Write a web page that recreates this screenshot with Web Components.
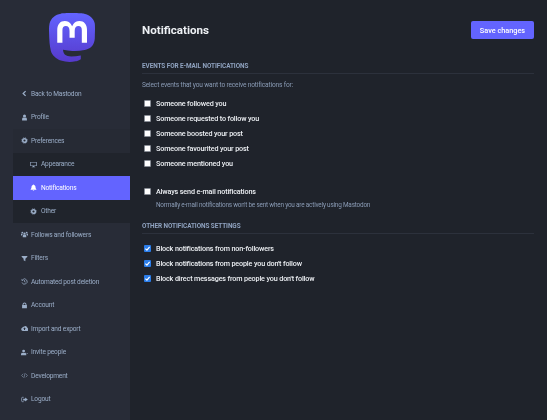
<!DOCTYPE html>
<html lang="en"><head><meta charset="utf-8"><title>Notifications</title>
<style>
html,body{margin:0;height:100%;background:#1f232b;overflow:hidden}
body{font-family:Roboto,"Liberation Sans",sans-serif}
</style></head><body>
<settings-page>
  <settings-nav slot="nav">
    <brand-logo></brand-logo>
    <nav-item icon="back">Back to Mastodon</nav-item>
    <nav-item icon="user">Profile</nav-item>
    <nav-group>
      <nav-item slot="head" icon="cog" tone="open">Preferences</nav-item>
      <nav-item sub icon="desktop">Appearance</nav-item>
      <nav-item sub active icon="bell">Notifications</nav-item>
      <nav-item sub icon="cog">Other</nav-item>
    </nav-group>
    <nav-item icon="users">Follows and followers</nav-item>
    <nav-item icon="filter">Filters</nav-item>
    <nav-item icon="history">Automated post deletion</nav-item>
    <nav-item icon="lock">Account</nav-item>
    <nav-item icon="cloud">Import and export</nav-item>
    <nav-item icon="userplus">Invite people</nav-item>
    <nav-item icon="code">Development</nav-item>
    <nav-item icon="signout">Logout</nav-item>
  </settings-nav>
  <page-header>Notifications<primary-button slot="action">Save changes</primary-button></page-header>
  <section-heading>Events for e-mail notifications</section-heading>
  <hint-text lead>Select events that you want to receive notifications for:</hint-text>
  <check-row>Someone followed you</check-row>
  <check-row>Someone requested to follow you</check-row>
  <check-row>Someone boosted your post</check-row>
  <check-row>Someone favourited your post</check-row>
  <check-row>Someone mentioned you</check-row>
  <check-row spaced>Always send e-mail notifications</check-row>
  <hint-text>Normally e-mail notifications won't be sent when you are actively using Mastodon</hint-text>
  <section-heading second>Other notifications settings</section-heading>
  <check-row checked>Block notifications from non-followers</check-row>
  <check-row checked>Block notifications from people you don't follow</check-row>
  <check-row checked>Block direct messages from people you don't follow</check-row>
</settings-page>
<script>
const ICONS={
 back:'<path d="M10.500 2.500 5 8l5.500 5.500" fill="none" stroke="currentColor" stroke-width="3"/>',
 user:'<circle cx="8" cy="4.500" r="3.500"/><path d="M2.500 15v-3.500c0-2.200 1.300-3.700 3-3.700.7.600 1.500.9 2.500.9s1.800-.3 2.500-.9c1.700 0 3 1.500 3 3.700V15z"/>',
 cog:'<circle cx="8" cy="8" r="4.200" fill="none" stroke="currentColor" stroke-width="3.400"/><circle cx="8" cy="8" r="6.300" fill="none" stroke="currentColor" stroke-width="1.800" stroke-dasharray="2.500 2.450"/>',
 desktop:'<path fill-rule="evenodd" d="M.5 2h15v9.500h-5.500l.5 2h1.500v1h-8v-1h1.500l.5-2H.5zM2 3.500v6.500h12V3.500z"/>',
 bell:'<path d="M8 1c.6 0 1 .4 1 1 2.400.5 3.500 2.300 3.500 4.500 0 3 .8 4.500 2 5.500v1h-13v-1c1.200-1 2-2.500 2-5.500C3.500 4.300 4.600 2.500 7 2c0-.6.400-1 1-1z"/><path d="M6.300 14h3.400a1.700 1.700 0 0 1-3.400 0z"/>',
 users:'<circle cx="8" cy="6" r="2.600"/><circle cx="3" cy="3.500" r="2"/><circle cx="13" cy="3.500" r="2"/><path d="M4 14v-3c0-1.700 1-2.800 2-3 .5.400 1.200.7 2 .7s1.500-.3 2-.7c1 .2 2 1.300 2 3v3z"/><path d="M0 10V7.500C0 6.300.7 5.500 1.500 5.500c.4.300 1 .5 1.600.5 0 .8.300 1.500.8 2-1 .5-1.600 1.200-1.800 2zM16 10V7.500c0-1.200-.7-2-1.500-2-.4.300-1 .5-1.600.5 0 .8-.3 1.500-.8 2 1 .5 1.600 1.200 1.800 2z"/>',
 filter:'<path d="M1.500 2h13v2L10 8.300V14l-4-2V8.300L1.500 4z"/>',
 history:'<path d="M3.800 3.800A6 6 0 1 1 2.300 10" fill="none" stroke="currentColor" stroke-width="1.700"/><path d="M1.300 1.800 1.500 6.300l4.300-.3zM7.500 4.500h1.500v3.300l2 1.500-.9 1.100-2.600-2z"/>',
 lock:'<path fill-rule="evenodd" d="M3.500 7V5.500a4.500 4.500 0 0 1 9 0V7h1v7.500h-11V7zm2.200 0h4.600V5.500a2.300 2.300 0 0 0-4.600 0z"/>',
 cloud:'<path fill-rule="evenodd" d="M4 13.500A3.700 3.700 0 0 1 3 6.300a3 3 0 0 1 3.700-2.100 4.500 4.500 0 0 1 8 2.700 3.400 3.400 0 0 1-2 6.600zM8 5.500 4.800 8.800h2.100v2.700h2.200V8.800h2.100z"/>',
 userplus:'<circle cx="6" cy="4.800" r="3.300"/><path d="M0 14.500v-2.700c0-2.100 1.300-3.500 3-3.500.8.600 1.800.9 3 .9s2.200-.3 3-.9c1.700 0 3 1.400 3 3.500v2.700z"/><path d="M12.500 9.500H16v1.600h-3.500z"/>',
 code:'<path d="M5 4 1.500 8 5 12M11 4l3.500 4L11 12M9.400 2.500l-2.800 11" fill="none" stroke="currentColor" stroke-width="1.200"/>',
 signout:'<path d="M6 3H3.500a2 2 0 0 0-2 2v6a2 2 0 0 0 2 2H6" fill="none" stroke="currentColor" stroke-width="1.800"/><path d="M9.500 3.500 15.500 8l-6 4.500V10H5V6h4.500z"/>'
};
function def(name,css,html,init){
  customElements.define(name,class extends HTMLElement{
    constructor(){super();this.attachShadow({mode:'open'}).innerHTML='<style>'+css+'</style>'+html;}
    connectedCallback(){init&&init.call(this,this.shadowRoot);}
  });
}
def('settings-page',`
 :host{display:grid;grid-template-columns:130px 1fr;width:547px;height:420px;background:#1f232b;color:#fff;overflow:hidden;filter:blur(.15px)}
 .nav{background:#282c37;height:420px;overflow:hidden}
 main{padding:0 13px 0 12px;min-width:0}
`,`<div class="nav"><slot name="nav"></slot></div><main><slot></slot></main>`);
def('settings-nav',`:host{display:block;padding-left:13px}`,`<slot></slot>`);
def('brand-logo',`:host{display:flex;justify-content:center;padding:13px 0 20.200px;height:49px}svg{width:46px;height:49px;display:block}`,
`<svg viewBox="0 0 61 65"><defs><linearGradient id="g" x1="30" x2="30" y1="0" y2="65" gradientUnits="userSpaceOnUse"><stop stop-color="#6364FF"/><stop offset="1" stop-color="#563ACC"/></linearGradient></defs>
<path fill="url(#g)" d="M60.7539 14.3904C59.8143 7.40642 53.7273 1.90257 46.5117 0.836066C45.2943 0.655854 40.6819 0 29.9973 0H29.9175C19.2299 0 16.937 0.655854 15.7196 0.836066C8.70488 1.87302 2.29885 6.81852 0.744617 13.8852C-0.00294988 17.3654 -0.0827298 21.2237 0.0561464 24.7629C0.254119 29.8384 0.292531 34.905 0.753482 39.9598C1.07215 43.3175 1.62806 46.6484 2.41704 49.9276C3.89445 55.9839 9.87499 61.0239 15.7344 63.0801C22.0077 65.2244 28.7542 65.5804 35.2184 64.1082C35.9295 63.9428 36.6318 63.7508 37.3252 63.5321C38.8971 63.0329 40.738 62.4745 42.0913 61.4937C42.1099 61.4799 42.1251 61.4621 42.1358 61.4417C42.1466 61.4212 42.1526 61.3986 42.1534 61.3755V56.4773C42.153 56.4557 42.1479 56.4345 42.1383 56.4151C42.1287 56.3958 42.1149 56.3788 42.0979 56.3655C42.0809 56.3522 42.0611 56.3429 42.04 56.3382C42.019 56.3335 41.9971 56.3336 41.9761 56.3384C37.8345 57.3276 33.5905 57.8234 29.3324 57.8156C22.0045 57.8156 20.0336 54.3384 19.4693 52.8908C19.0156 51.6397 18.7275 50.3346 18.6124 49.0088C18.6112 48.9866 18.6153 48.9643 18.6243 48.9439C18.6333 48.9236 18.647 48.9056 18.6643 48.8915C18.6816 48.8774 18.7019 48.8675 18.7237 48.8628C18.7455 48.858 18.7681 48.8585 18.7897 48.8641C22.8622 49.8465 27.037 50.3423 31.2265 50.3412C32.234 50.3412 33.2387 50.3412 34.2463 50.3146C38.4598 50.1964 42.9009 49.9808 47.0465 49.1713C47.1499 49.1506 47.2534 49.1329 47.342 49.1063C53.881 47.8507 60.1038 43.9097 60.7362 33.9301C60.7598 33.5372 60.8189 29.8148 60.8189 29.4071C60.8218 28.0215 61.2651 19.5781 60.7539 14.3904Z"/>
<path fill="#fff" d="M50.3943 22.237V39.5876H43.5185V22.7481C43.5185 19.2029 42.0411 17.3949 39.036 17.3949C35.7325 17.3949 34.0778 19.5338 34.0778 23.7585V32.9759H27.2434V23.7585C27.2434 19.5338 25.5857 17.3949 22.2822 17.3949C19.2949 17.3949 17.8027 19.2029 17.8027 22.7481V39.5876H10.9298V22.237C10.9298 18.6918 11.835 15.8754 13.6453 13.7877C15.5128 11.7049 17.9623 10.6355 21.0028 10.6355C24.522 10.6355 27.1813 11.9885 28.9556 14.6917L30.6669 17.5633L32.3811 14.6917C34.1555 11.9885 36.8147 10.6355 40.3311 10.6355C43.3686 10.6355 45.8181 11.7049 47.6915 13.7877C49.5017 15.8734 50.4059 18.6899 50.4028 22.237H50.3943Z"/></svg>`);
def('nav-group',`:host{display:block;background:#20242c}`,`<slot name="head"></slot><slot></slot>`);
def('nav-item',`
 :host{display:flex;align-items:center;height:23.500px;gap:3.500px;padding-left:7.500px;font-size:6.600px;letter-spacing:-.18px;color:#9baec8;background:#282c37;white-space:nowrap}
 :host([tone=open]){background:#262a34}
 :host([sub]){padding-left:17px;gap:4px;background:#20242c}
 :host([active]){background:#6364ff;color:#fff}
 svg{width:7px;height:7px;fill:currentColor;flex:none;display:block}
`,`<svg viewBox="0 0 16 16"></svg><span><slot></slot></span>`,function(r){r.querySelector('svg').innerHTML=ICONS[this.getAttribute('icon')]||'';});
def('page-header',`
 :host{display:flex;align-items:center;justify-content:space-between;height:59.500px;padding-top:.500px;box-sizing:border-box;font-size:11.600px;font-weight:700;color:#eef1f5}
`,`<span><slot></slot></span><slot name="action"></slot>`);
def('primary-button',`
 :host{display:flex;align-items:center;justify-content:center;width:63px;height:17.500px;background:#6364ff;color:#fff;border-radius:2px;font-size:7.300px;font-weight:500}
`,`<slot></slot>`);
def('section-heading',`
 :host{display:block;height:12px;line-height:12px;font-size:6.400px;font-weight:700;letter-spacing:-.07px;padding-bottom:1px;text-transform:uppercase;color:#8fa2bf;border-bottom:1px solid #2c313c;box-sizing:content-box}
 :host([second]){margin-top:9.500px;margin-bottom:6.800px}
`,`<slot></slot>`);
def('hint-text',`
 :host{display:block;font-size:6.400px;letter-spacing:-.2px;line-height:11px;color:#8a9bb5;padding-top:.400px;padding-left:14px}
 :host([lead]){font-size:6.600px;letter-spacing:-.16px;padding:6px 0 5.500px}
`,`<slot></slot>`);
def('check-row',`
 :host{display:flex;align-items:center;gap:4.700px;height:15.100px;padding-left:2.300px;font-size:7.200px;letter-spacing:-.14px;font-weight:500;color:#eef1f5;white-space:nowrap}
 :host([spaced]){margin-top:12.800px}
 .box{width:7px;height:7px;margin-bottom:1px;border-radius:1px;background:#fff;flex:none;display:block;box-sizing:border-box;border:.5px solid #8a8f98}
 :host([checked]) .box{background:#2b7de9;border:0;margin-bottom:.5px}
 svg{display:none;width:100%;height:100%}
 :host([checked]) svg{display:block}
`,`<span class="box" role="checkbox"><svg viewBox="0 0 10 10"><path d="M2 5.200 4.200 7.400 8 2.800" fill="none" stroke="#fff" stroke-width="1.700"/></svg></span><span><slot></slot></span>`);
</script>
</body></html>
